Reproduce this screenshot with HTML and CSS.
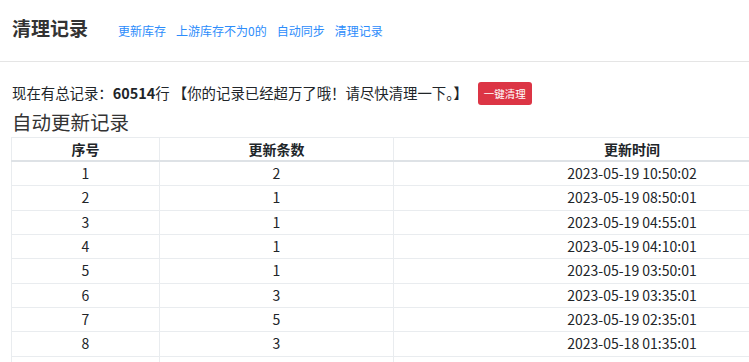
FILE: index.html
```html
<!DOCTYPE html>
<html lang="zh-CN">
<head>
<meta charset="utf-8">
<title>清理记录</title>
<link rel="stylesheet" href="styles.css">
</head>
<body>
<header class="topbar">
  <div class="brand">清理记录</div>
  <nav class="nav">
    <a href="#">更新库存</a>
    <a href="#">上游库存不为0的</a>
    <a href="#">自动同步</a>
    <a href="#">清理记录</a>
  </nav>
</header>
<main class="main">
  <div class="info">
    <span class="info-text">现在有总记录：<b>60514</b>行 【你的记录已经超万了哦！请尽快清理一下。】</span>
    <button class="btn-danger">一键清理</button>
  </div>
  <h5 class="section-title">自动更新记录</h5>
  <table class="records">
    <colgroup>
      <col class="c1"><col class="c2"><col class="c3">
    </colgroup>
    <thead>
      <tr><th>序号</th><th>更新条数</th><th>更新时间</th></tr>
    </thead>
    <tbody>
      <tr><td>1</td><td>2</td><td>2023-05-19 10:50:02</td></tr>
      <tr><td>2</td><td>1</td><td>2023-05-19 08:50:01</td></tr>
      <tr><td>3</td><td>1</td><td>2023-05-19 04:55:01</td></tr>
      <tr><td>4</td><td>1</td><td>2023-05-19 04:10:01</td></tr>
      <tr><td>5</td><td>1</td><td>2023-05-19 03:50:01</td></tr>
      <tr><td>6</td><td>3</td><td>2023-05-19 03:35:01</td></tr>
      <tr><td>7</td><td>5</td><td>2023-05-19 02:35:01</td></tr>
      <tr><td>8</td><td>3</td><td>2023-05-18 01:35:01</td></tr>
      <tr class="row-edge"><td>&nbsp;</td><td>&nbsp;</td><td>&nbsp;</td></tr>
    </tbody>
  </table>
</main>
</body>
</html>
```
FILE: styles.css
```css
html, body {
  margin: 0;
  padding: 0;
  background: #fff;
}
body {
  font-family: "Noto Sans CJK SC", "Noto Sans", sans-serif;
  color: #212529;
  font-size: 14px;
  overflow: hidden;
}
.topbar {
  display: flex;
  align-items: baseline;
  box-sizing: border-box;
  height: 62px;
  padding: 16px 12px 0;
  border-bottom: 1px solid #e5e5e5;
}
.brand {
  font-size: 19px;
  line-height: 24px;
  font-weight: 700;
  color: #333;
}
.nav {
  display: flex;
  gap: 10px;
  margin-left: 30px;
}
.nav a {
  font-size: 12px;
  color: #2c8cfb;
  text-decoration: none;
}
.main {
  padding: 0 0 0 11px;
}
.info {
  display: flex;
  align-items: center;
  height: 23px;
  margin-top: 20px;
  padding-left: 1px;
}
.info-text {
  font-size: 14.4px;
  line-height: 20px;
  margin-top: -2px;
}
.info-text b {
  font-weight: 700;
}
.btn-danger {
  margin-left: 10px;
  height: 23px;
  padding: 0 6px;
  border: 0;
  border-radius: 3px;
  background: #dc3545;
  color: #fff;
  font-family: inherit;
  font-size: 10.5px;
  line-height: 23px;
}
.section-title {
  margin: 5px 0 3px 1px;
  font-size: 19.5px;
  line-height: 24px;
  font-weight: 400;
  color: #333;
}
.records {
  border-collapse: collapse;
  width: 860px;
  table-layout: fixed;
  border: 1px solid #e9ecef;
}
.records .c1 { width: 148px; }
.records .c2 { width: 234px; }
.records th,
.records td {
  text-align: center;
  border-left: 1px solid #e9ecef;
  border-right: 1px solid #e9ecef;
  padding: 2px 4px;
}
.records th {
  font-weight: 700;
  line-height: 18px;
  border-top: 1px solid #e9ecef;
  border-bottom: 2px solid #dee2e6;
}
.records td {
  line-height: 19.33px;
  border-top: 1px solid #e9ecef;
}
```
